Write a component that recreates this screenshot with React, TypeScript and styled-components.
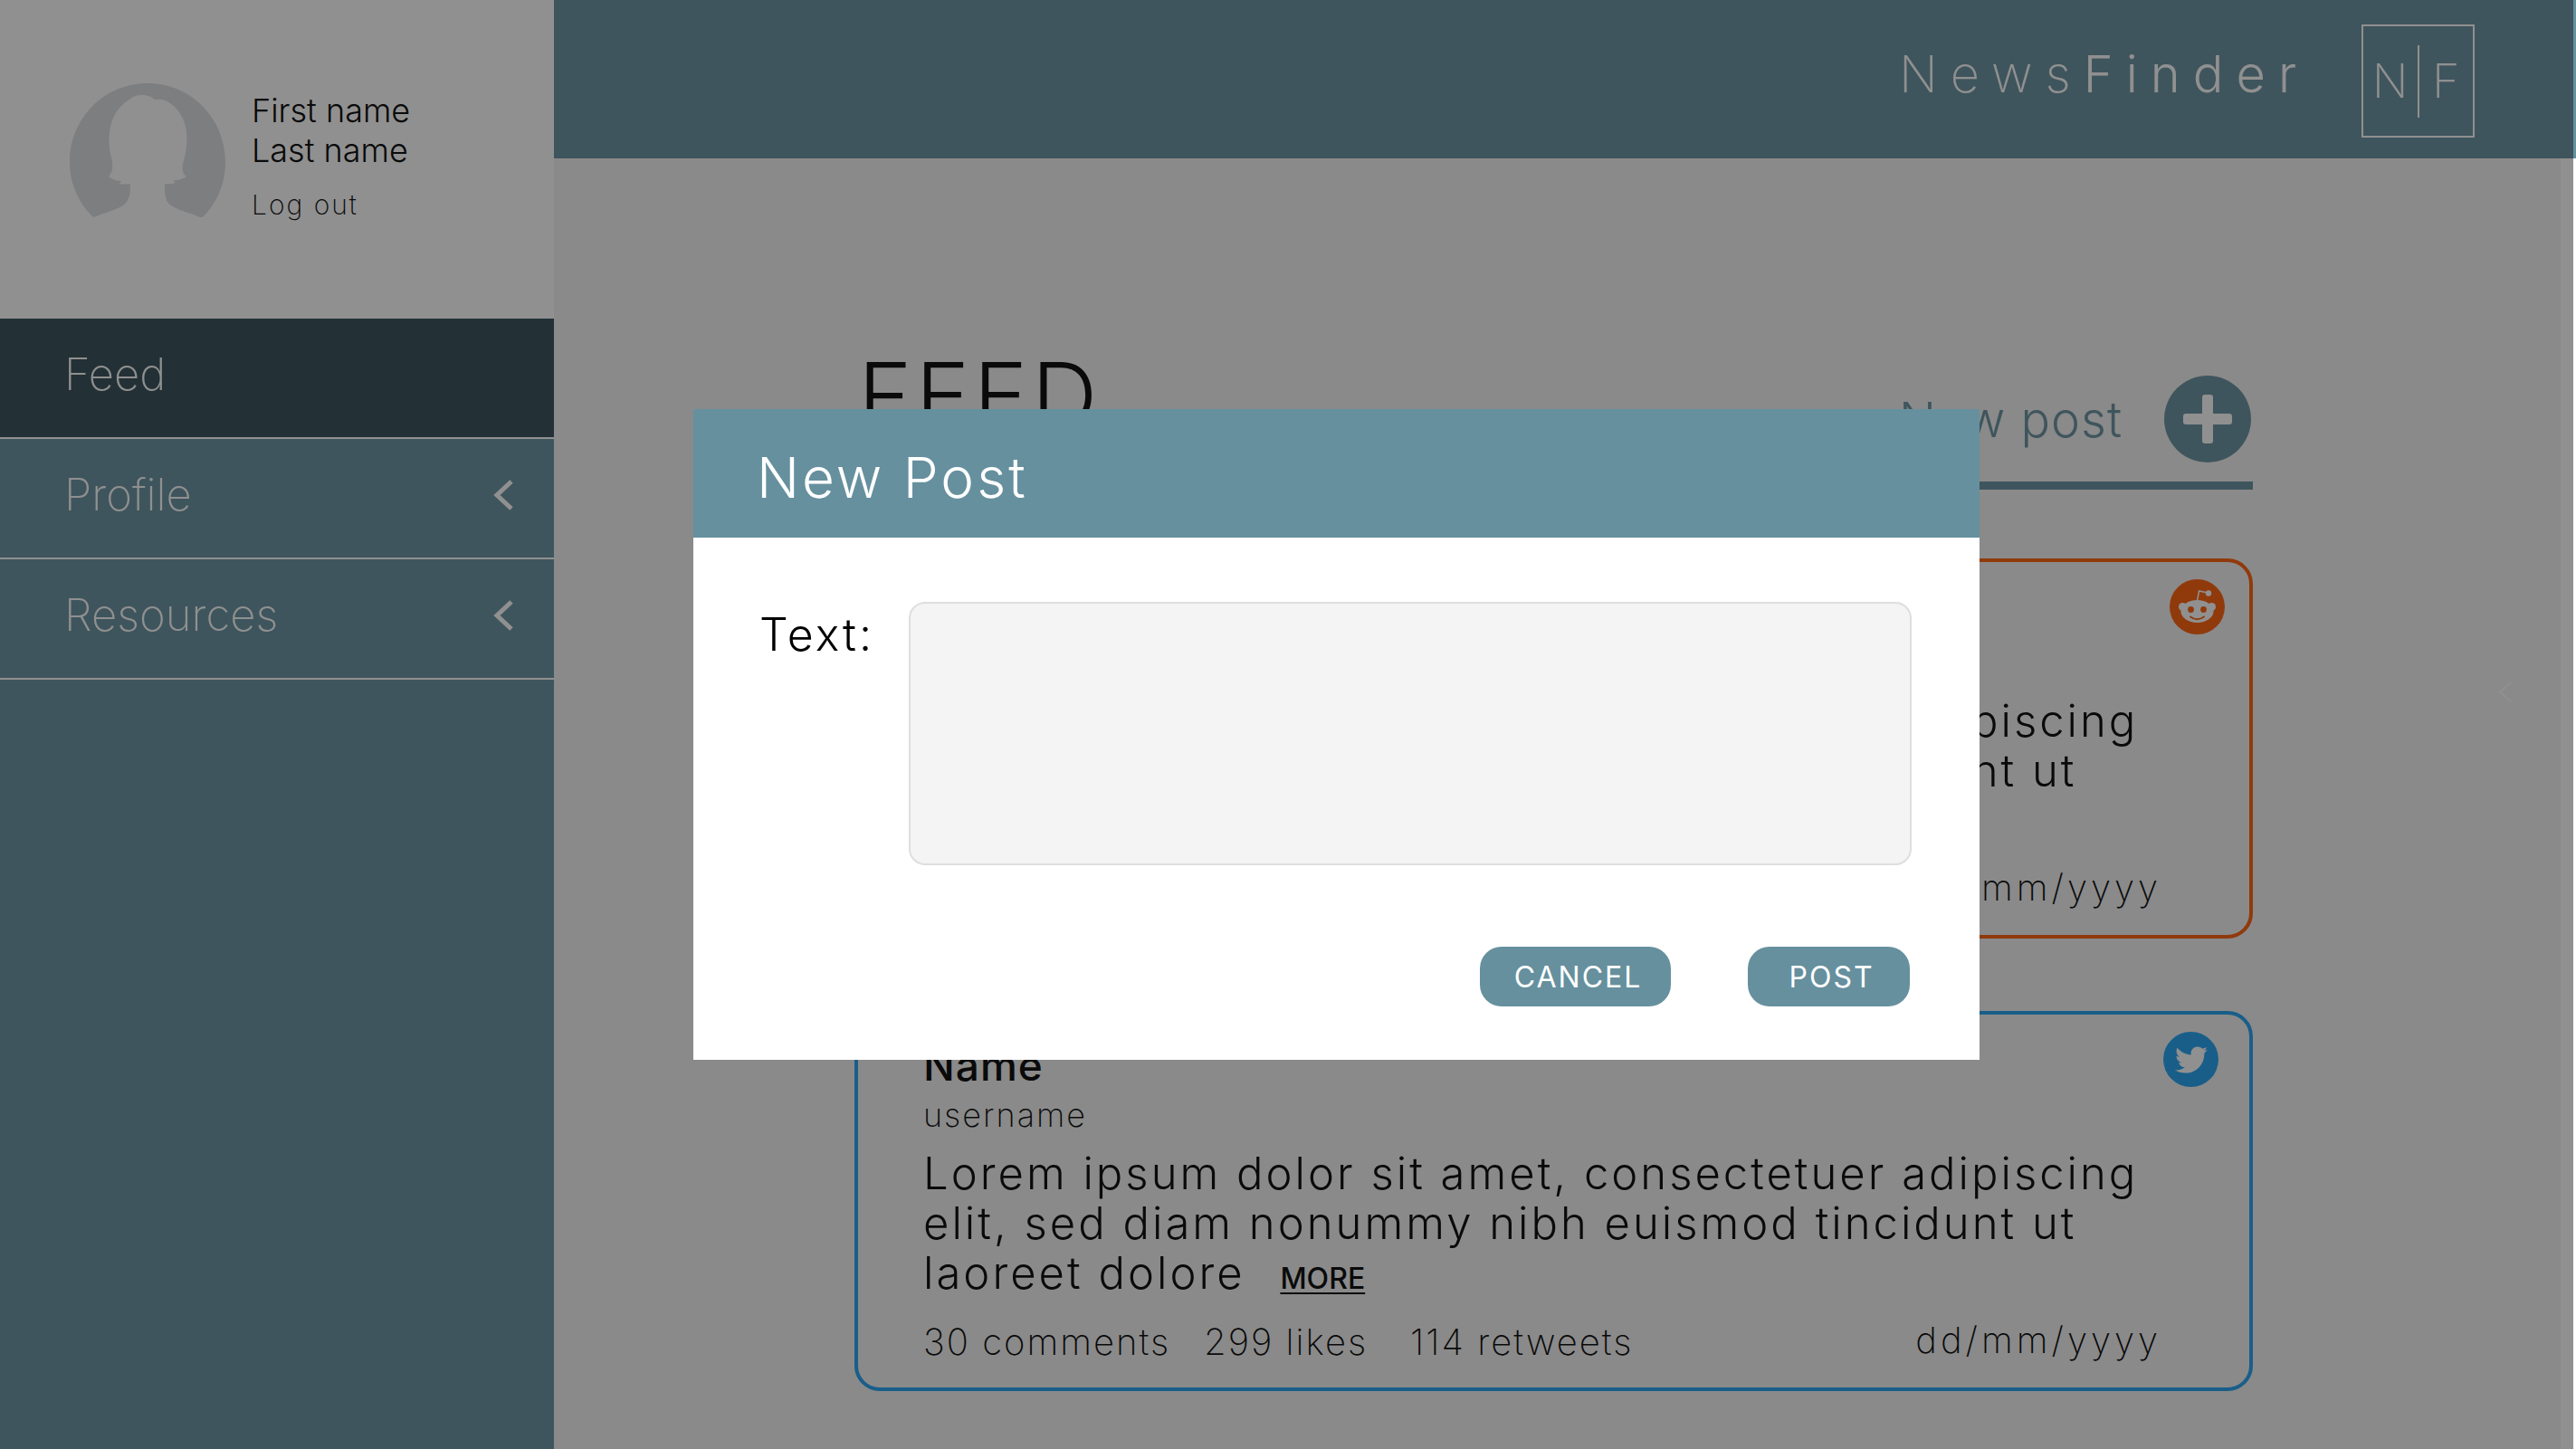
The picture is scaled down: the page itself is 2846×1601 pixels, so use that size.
import React from "react";
import styled, { createGlobalStyle } from "styled-components";
import { FaTwitter } from "react-icons/fa";

const teal = "#66909e";

const GlobalStyle = createGlobalStyle`
  *, *::before, *::after { box-sizing: border-box; }
  body {
    margin: 0;
    background: #f3f3f3;
    color: #000;
    font-family: Inter, "Liberation Sans", sans-serif;
    font-weight: 300;
  }
  h1, h2, h3, p, ul { margin: 0; padding: 0; font-weight: inherit; }
  a { color: inherit; text-decoration: none; }
  button { border: 0; padding: 0; font: inherit; color: inherit; cursor: pointer; }
`;

const Page = styled.div`
  display: flex;
  min-height: 100vh;
`;

const Sidebar = styled.aside`
  flex: 0 0 612px;
  background: ${teal};
`;

const UserPanel = styled.section`
  display: flex;
  height: 352px;
  padding: 92px 0 0 77px;
  gap: 29px;
  background: #fff;
`;

const Avatar = styled.svg`
  width: 172px;
  height: 172px;
`;

const UserText = styled.div`
  padding-top: 8px;
`;

const UserName = styled.p`
  font-size: 36px;
  line-height: 44px;
`;

const LogOut = styled.a`
  display: block;
  margin-top: 16px;
  font-size: 30px;
  line-height: 44px;
  letter-spacing: 2px;
  font-weight: 200;
`;

const NavList = styled.ul`
  list-style: none;
`;

const NavItem = styled.li<{ $active?: boolean }>`
  border-bottom: 2px solid #fff;
  background: ${(p) => (p.$active ? "#304b54" : teal)};
`;

const NavLink = styled.a`
  display: flex;
  align-items: center;
  justify-content: space-between;
  height: 131px;
  padding: 0 45px 8px 71px;
  font-size: 49px;
  font-weight: 200;
  color: #fff;
`;

const NavChevron = styled.svg`
  width: 22px;
  height: 34px;
  fill: none;
  stroke: #fff;
  stroke-width: 5;
`;

const Main = styled.div`
  flex: 1;
  min-width: 0;
  display: flex;
  flex-direction: column;
`;

const TopBar = styled.header`
  display: flex;
  align-items: flex-start;
  justify-content: flex-end;
  height: 175px;
  padding: 27px 112px 0 0;
  gap: 58px;
  background: ${teal};
  color: #fff;
`;

const Brand = styled.a`
  padding-top: 19px;
  font-size: 56px;
  line-height: 72px;
  letter-spacing: 14px;
  font-weight: 200;
`;

const BrandStrong = styled.span`
  font-weight: 300;
`;

const Logo = styled.div`
  display: grid;
  grid-template-columns: 1fr 2px 1fr;
  align-items: center;
  justify-items: center;
  width: 125px;
  height: 125px;
  border: 2px solid #fff;
  font-size: 52px;
  font-weight: 200;
`;

const LogoDivider = styled.span`
  width: 2px;
  height: 80px;
  background: #fff;
`;

const Body = styled.div`
  flex: 1;
  display: flex;
  padding-left: 332px;
  border-right: 17px solid #fff;
`;

const Feed = styled.main`
  flex: 1;
  min-width: 0;
  padding: 211px 0 60px;
`;

const FeedHeader = styled.div`
  display: flex;
  justify-content: space-between;
  height: 155px;
  border-bottom: 9px solid ${teal};
`;

const FeedTitle = styled.h1`
  padding-left: 4px;
  font-size: 101px;
  line-height: 100px;
  letter-spacing: 4px;
`;

const NewPostButton = styled.button`
  display: flex;
  align-items: center;
  align-self: flex-end;
  gap: 46px;
  padding: 0 2px 21px 0;
  background: none;
  color: ${teal};
  font-size: 54px;
  letter-spacing: 1px;
`;

const PlusIcon = styled.svg`
  width: 96px;
  height: 96px;
`;

const CardList = styled.div`
  display: grid;
  gap: 80px;
  padding-top: 76px;
`;

const Card = styled.article<{ $color: string }>`
  position: relative;
  padding: 32px 97px 26px 72px;
  border: 4px solid ${(p) => p.$color};
  border-radius: 28px;
`;

const SourceBadge = styled.span<{ $color: string; $right: number }>`
  position: absolute;
  top: 19px;
  right: ${(p) => p.$right}px;
  display: grid;
  place-items: center;
  width: 61px;
  height: 61px;
  border-radius: 50%;
  background: ${(p) => p.$color};
  color: #fff;
  font-size: 36px;
`;

const RedditGlyph = styled.svg`
  width: 61px;
  height: 61px;
`;

const CardName = styled.h2`
  font-size: 46px;
  line-height: 48px;
  font-weight: 500;
  letter-spacing: 1px;
`;

const CardUser = styled.p`
  margin-top: 7px;
  font-size: 36px;
  line-height: 48px;
  font-weight: 200;
  letter-spacing: 2px;
`;

const CardText = styled.p`
  margin-top: 13px;
  font-size: 49px;
  line-height: 55px;
  letter-spacing: 3px;
`;

const KeepTogether = styled.span`
  white-space: nowrap;
`;

const MoreLink = styled.a`
  margin-left: 22px;
  font-size: 32px;
  line-height: 32px;
  font-weight: 500;
  letter-spacing: 0;
  text-decoration: underline;
  text-decoration-thickness: 2px;
  text-underline-offset: 4px;
`;

const CardFooter = styled.footer`
  display: grid;
  grid-template-columns: 310px 228px auto 1fr;
  margin-top: 25px;
  font-size: 40px;
  line-height: 48px;
  font-weight: 200;
  letter-spacing: 2px;
`;

const PostDate = styled.time`
  line-height: 44px;
  letter-spacing: 4px;
  text-align: right;
`;

const PanelToggle = styled.button`
  align-self: flex-start;
  width: 340px;
  padding: 578px 0 0 271px;
  background: none;
  line-height: 0;
  text-align: left;
`;

const ToggleIcon = styled.svg`
  width: 15px;
  height: 23px;
  fill: none;
  stroke: #fff;
  stroke-width: 2;
`;

const Overlay = styled.div`
  position: fixed;
  inset: 0 3px 0 0;
  display: grid;
  place-items: center;
  padding: 22px 0 0 110px;
  background: rgba(22, 22, 22, 0.475);
`;

const Dialog = styled.form`
  width: 52%;
  background: #fff;
`;

const DialogHeader = styled.header`
  display: flex;
  align-items: center;
  height: 142px;
  padding: 10px 70px 0;
  background: ${teal};
  color: #fff;
`;

const DialogTitle = styled.h2`
  font-size: 62px;
  line-height: 72px;
  letter-spacing: 3px;
`;

const DialogBody = styled.div`
  padding: 71px 75px 59px 73px;
`;

const Field = styled.div`
  display: grid;
  grid-template-columns: 165px 1fr;
  align-items: start;
`;

const FieldLabel = styled.label`
  padding-top: 8px;
  font-size: 50px;
  line-height: 56px;
  letter-spacing: 3px;
`;

const TextArea = styled.textarea`
  display: block;
  width: 100%;
  height: 291px;
  padding: 20px 24px;
  border: 2px solid #dedede;
  border-radius: 18px;
  outline: 0;
  resize: none;
  background: #f4f4f4;
  font: inherit;
  font-size: 40px;
`;

const Actions = styled.div`
  display: flex;
  justify-content: flex-end;
  gap: 85px;
  margin-top: 90px;
  padding-right: 2px;
`;

const ActionButton = styled.button<{ $width: number }>`
  width: ${(p) => p.$width}px;
  height: 66px;
  padding-left: 6px;
  border-radius: 24px;
  background: ${teal};
  color: #fff;
  font-size: 32px;
  font-weight: 400;
  letter-spacing: 2px;
`;

function Chevron() {
  return (
    <NavChevron viewBox="0 0 22 34" aria-hidden="true">
      <path d="M20 2 L4 17 L20 32" />
    </NavChevron>
  );
}

function RedditIcon() {
  return (
    <RedditGlyph viewBox="0 0 61 61" aria-hidden="true">
      <path d="M30.500 24 L32.500 13 L42 15" fill="none" stroke="#fff" strokeWidth="1.500" />
      <circle cx="43" cy="15.500" r="3.200" fill="#fff" />
      <circle cx="14.500" cy="30.500" r="4.500" fill="#fff" />
      <circle cx="46.500" cy="30.500" r="4.500" fill="#fff" />
      <ellipse cx="30.500" cy="35.500" rx="18" ry="12.500" fill="#fff" />
      <circle cx="23.500" cy="33.500" r="3.400" fill="#ff5c04" />
      <circle cx="37.500" cy="33.500" r="3.400" fill="#ff5c04" />
      <path d="M23 41.500 Q30.500 47 38 41.500" fill="none" stroke="#ff5c04" strokeWidth="2" strokeLinecap="round" />
    </RedditGlyph>
  );
}

const posts = [
  { id: "reddit", color: "#ff5c04", right: 27 },
  { id: "twitter", color: "#1da1f2", right: 34 },
];

export default function App() {
  return (
    <>
      <GlobalStyle />
      <Page>
        <Sidebar>
          <UserPanel>
            <Avatar viewBox="0 0 172 172" role="img" aria-label="User avatar">
              <path
                fill="#dadce0"
                fillRule="evenodd"
                d="M86 0 C134 0 172 39 172 87 C172 112 162 133 147 148 L144 148 C130 142 110 138 107 129 C105 124 105 118 105 111 Q112 112 117 110 L114 107 Q122 108 129 103 C122 98 125 88 127 82 C132 60 130 40 116 26 Q106 16 94 18 C88 12 74 11 67 17 Q60 22 56 26 C43 40 41 63 46 82 C48 92 48 98 43 103 Q49 108 57 108 L55 111 Q60 112 67 111 C67 118 67 124 64 129 C61 138 40 142 27 148 L25 147 C10 132 0 111 0 87 C0 39 38 0 86 0 Z"
              />
            </Avatar>
            <UserText>
              <UserName>First name</UserName>
              <UserName>Last name</UserName>
              <LogOut href="#logout">Log out</LogOut>
            </UserText>
          </UserPanel>
          <nav>
            <NavList>
              <NavItem $active>
                <NavLink href="#feed">Feed</NavLink>
              </NavItem>
              <NavItem>
                <NavLink href="#profile">
                  Profile
                  <Chevron />
                </NavLink>
              </NavItem>
              <NavItem>
                <NavLink href="#resources">
                  Resources
                  <Chevron />
                </NavLink>
              </NavItem>
            </NavList>
          </nav>
        </Sidebar>
        <Main>
          <TopBar>
            <Brand href="#home">
              News<BrandStrong>Finder</BrandStrong>
            </Brand>
            <Logo>
              <span>N</span>
              <LogoDivider />
              <span>F</span>
            </Logo>
          </TopBar>
          <Body>
            <Feed>
              <FeedHeader>
                <FeedTitle>FEED</FeedTitle>
                <NewPostButton type="button">
                  New post
                  <PlusIcon viewBox="0 0 96 96" aria-hidden="true">
                    <circle cx="48" cy="48" r="48" fill={teal} />
                    <rect x="42" y="21" width="12" height="54" rx="3" fill="#fff" />
                    <rect x="21" y="42" width="54" height="12" rx="3" fill="#fff" />
                  </PlusIcon>
                </NewPostButton>
              </FeedHeader>
              <CardList>
                {posts.map((post) => (
                  <Card key={post.id} $color={post.color}>
                    <SourceBadge $color={post.color} $right={post.right}>
                      {post.id === "reddit" ? <RedditIcon /> : <FaTwitter />}
                    </SourceBadge>
                    <CardName>Name</CardName>
                    <CardUser>username</CardUser>
                    <CardText>
                      Lorem ipsum dolor sit amet, consectetuer adipiscing elit, sed diam nonummy nibh
                      euismod tincidunt ut{" "}
                      <KeepTogether>
                        <span>laoreet dolore</span> <MoreLink href="#more">MORE</MoreLink>
                      </KeepTogether>
                    </CardText>
                    <CardFooter>
                      <span>30 comments</span>
                      <span>299 likes</span>
                      <span>114 retweets</span>
                      <PostDate>dd/mm/yyyy</PostDate>
                    </CardFooter>
                  </Card>
                ))}
              </CardList>
            </Feed>
            <PanelToggle type="button" aria-label="Open panel">
              <ToggleIcon viewBox="0 0 15 23" aria-hidden="true">
                <path d="M14 1 L2 11.500 L14 22" />
              </ToggleIcon>
            </PanelToggle>
          </Body>
        </Main>
      </Page>
      <Overlay>
        <Dialog role="dialog" aria-labelledby="dialog-title">
          <DialogHeader>
            <DialogTitle id="dialog-title">New Post</DialogTitle>
          </DialogHeader>
          <DialogBody>
            <Field>
              <FieldLabel htmlFor="post-text">Text:</FieldLabel>
              <TextArea id="post-text" />
            </Field>
            <Actions>
              <ActionButton type="button" $width={211}>CANCEL</ActionButton>
              <ActionButton type="submit" $width={179}>POST</ActionButton>
            </Actions>
          </DialogBody>
        </Dialog>
      </Overlay>
    </>
  );
}
